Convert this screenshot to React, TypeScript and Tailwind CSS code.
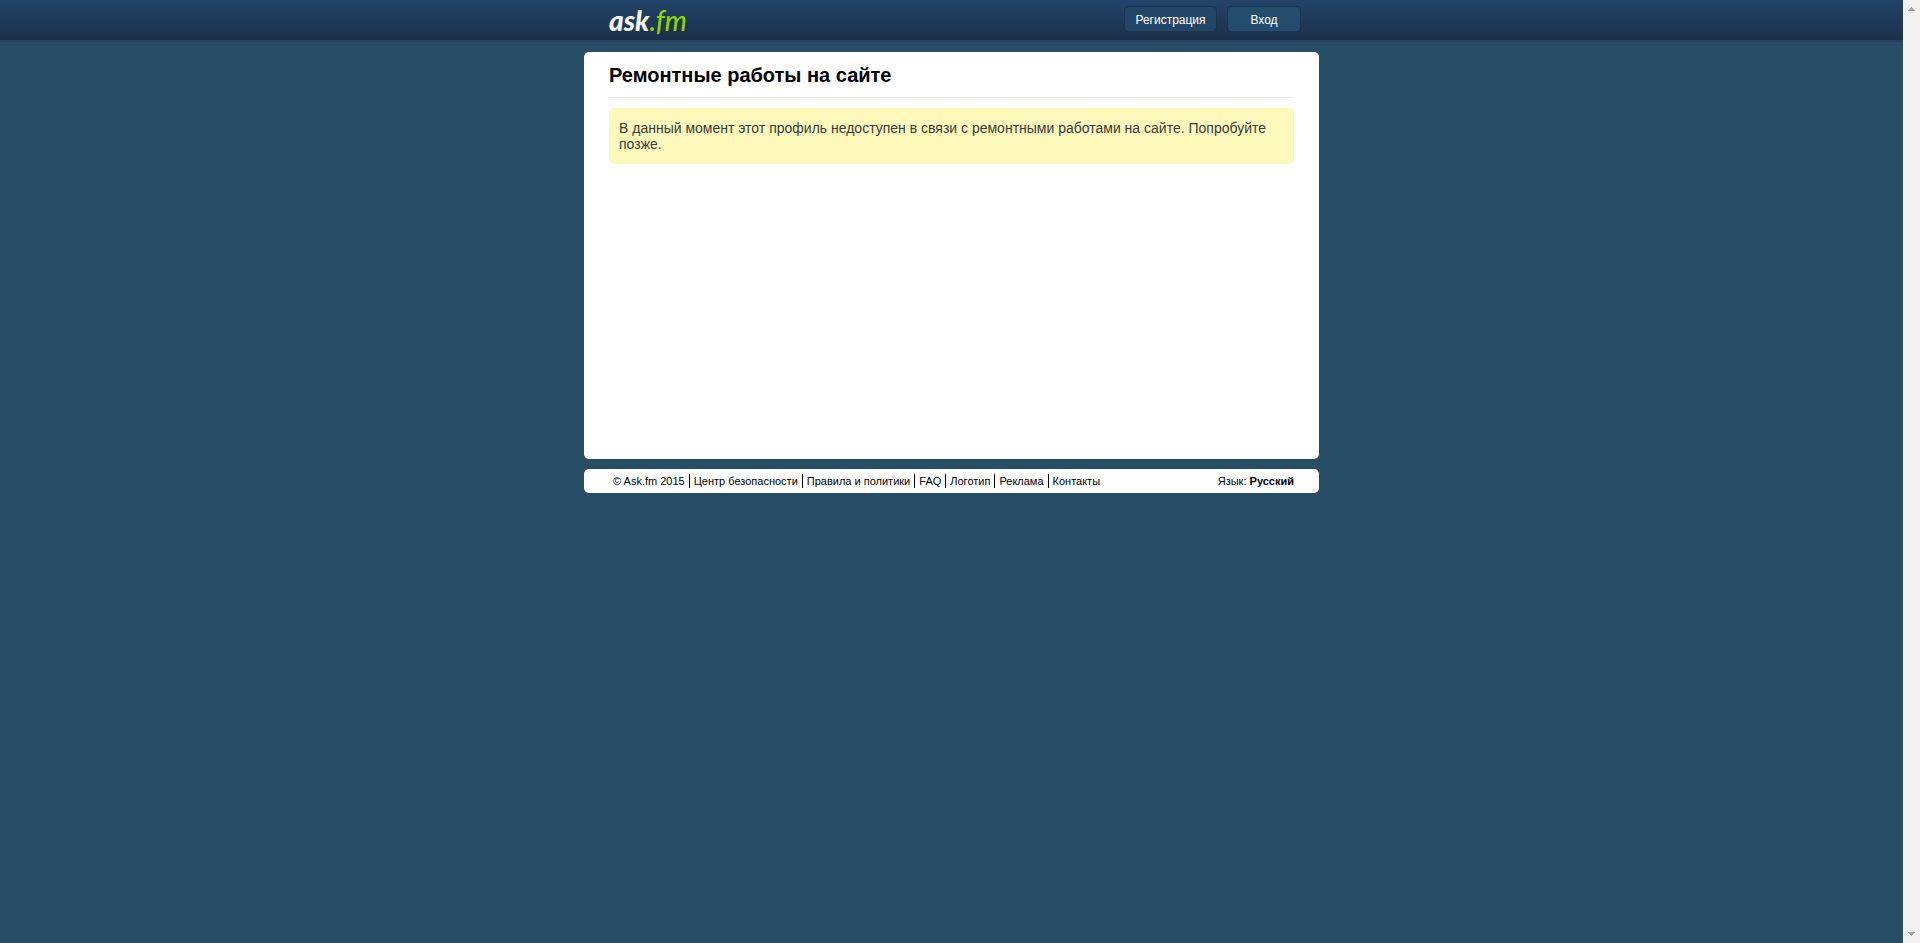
const footerLinks = ['Центр безопасности', 'Правила и политики', 'FAQ', 'Логотип', 'Реклама', 'Контакты'];

function Logo() {
  return (
    <a href="#" aria-label="ask.fm" className="mt-1 flex h-8 items-center font-[Lato,sans-serif] text-[28px] leading-8 italic">
      <span className="font-black text-[#f5f6f8]">ask</span>
      <span className="font-medium text-[#8fd400]">.fm</span>
    </a>
  );
}

function Header() {
  return (
    <header className="h-[42px] border-b-2 border-[#21435a] bg-linear-to-b from-[#22446a] to-[#1a3049]">
      <div className="mx-auto flex w-full max-w-[735px] items-start justify-between pr-[19px] pl-[25px]">
        <Logo />
        <nav className="mt-[7px] flex gap-3 text-[12px] text-white">
          <button type="button" className="h-6 w-[91px] rounded bg-[#234668] pt-0.5 leading-[22px] shadow-[0_0_0_1px_#1b334d]">
            Регистрация
          </button>
          <button type="button" className="h-6 w-[72px] rounded bg-[#224d6c] pt-0.5 leading-[22px] shadow-[0_0_0_1px_#1b334d]">
            Вход
          </button>
        </nav>
      </div>
    </header>
  );
}

function Footer() {
  return (
    <footer className="mt-2.5 flex min-h-6 items-center justify-between rounded-[5px] bg-white pr-[25px] pl-[29px] text-[11px] leading-[14px] text-black">
      <ul className="flex">
        <li className="pr-1">© Ask.fm 2015</li>
        {footerLinks.map((label) => (
          <li key={label} className="border-l border-black px-1">
            <a href="#">{label}</a>
          </li>
        ))}
      </ul>
      <div>
        Язык: <a href="#" className="font-bold">Русский</a>
      </div>
    </footer>
  );
}

function ScrollTrack() {
  return (
    <div aria-hidden="true" className="flex w-[17px] shrink-0 flex-col items-center justify-between bg-[#f0f0f0] py-[7px]">
      <svg width="7" height="4" viewBox="0 0 7 4" fill="#a3a3a3" shapeRendering="crispEdges">
        <path d="M3 0h1v1h1v1h1v1h1v1H0V3h1V2h1V1h1z" />
      </svg>
      <svg width="7" height="4" viewBox="0 0 7 4" fill="#a3a3a3" shapeRendering="crispEdges">
        <path d="M0 0h7v1H6v1H5v1H4v1H3V3H2V2H1V1H0z" />
      </svg>
    </div>
  );
}

export default function App() {
  return (
    <div className="flex min-h-screen bg-[#274c66] font-['Liberation_Sans',Arial,sans-serif]">
      <div className="min-w-0 flex-1">
        <Header />
        <div className="mx-auto mt-2.5 w-full max-w-[735px]">
          <main className="min-h-[407px] rounded-[5px] bg-white px-[25px] pt-[11px]">
            <h1 className="border-b border-[#ebebeb] pb-2.5 text-[20px] leading-6 font-bold text-black">
              Ремонтные работы на сайте
            </h1>
            <p className="mt-2.5 rounded-[5px] bg-[#fcf9ba] px-2.5 py-3 text-[14px] leading-4 text-[#3a3a3a]">
              В данный момент этот профиль недоступен в связи с ремонтными работами на сайте. Попробуйте позже.
            </p>
          </main>
          <Footer />
        </div>
      </div>
      <ScrollTrack />
    </div>
  );
}
